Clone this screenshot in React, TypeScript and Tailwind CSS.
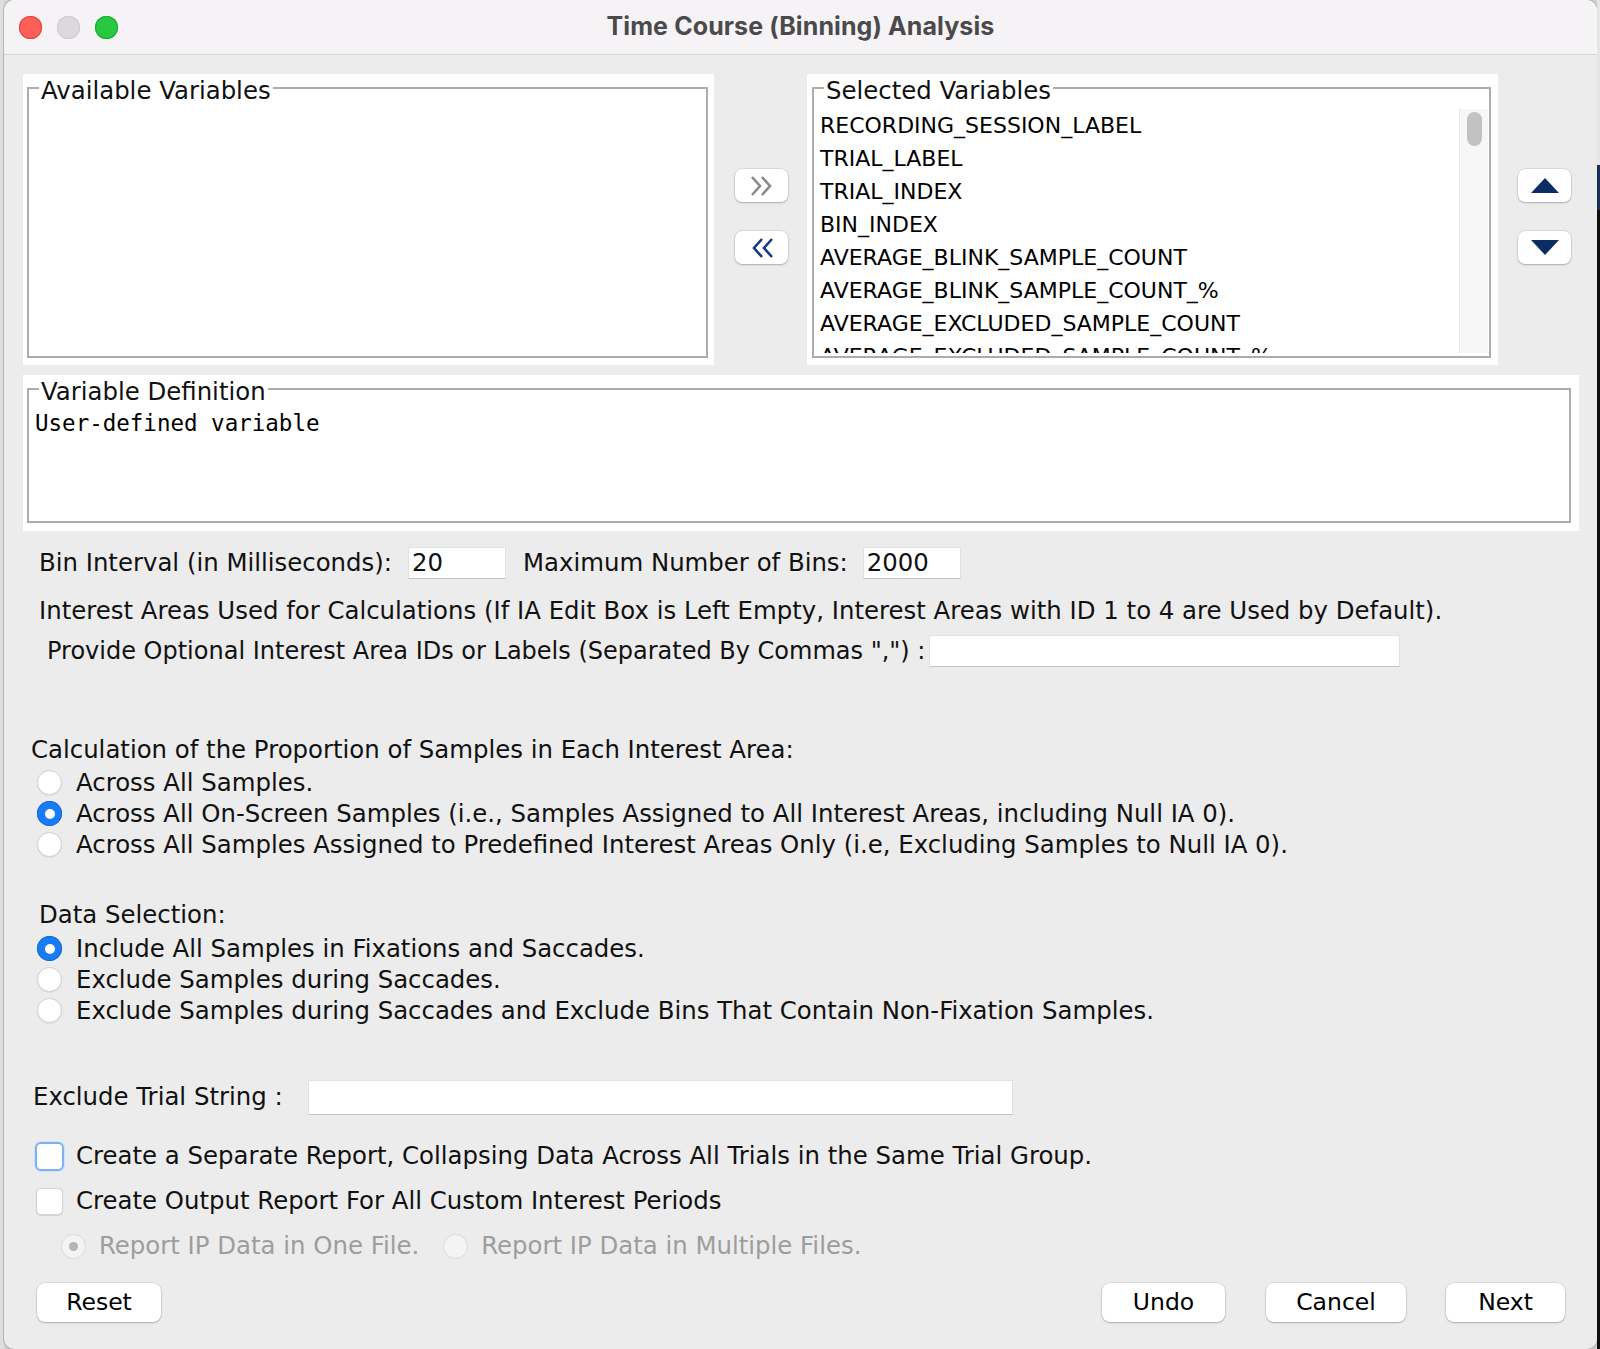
import React from "react";

const SANS = "font-['DejaVu_Sans',sans-serif]";

const selected = [
  "RECORDING_SESSION_LABEL",
  "TRIAL_LABEL",
  "TRIAL_INDEX",
  "BIN_INDEX",
  "AVERAGE_BLINK_SAMPLE_COUNT",
  "AVERAGE_BLINK_SAMPLE_COUNT_%",
  "AVERAGE_EXCLUDED_SAMPLE_COUNT",
  "AVERAGE_EXCLUDED_SAMPLE_COUNT_%",
];

const TitleBar = () => (
  <div className="h-[55px] shrink-0 grid grid-cols-[1fr_auto_1fr] items-center bg-[#f6f3f6] border-b border-[#d6d6d6]">
    <div className="flex items-center gap-[15px] pl-[15px]">
      <span className="w-[23px] h-[23px] rounded-full bg-[#fe5f57] shadow-[inset_0_0_0_1px_#e2463f]" />
      <span className="w-[23px] h-[23px] rounded-full bg-[#dcd9dc] shadow-[inset_0_0_0_1px_#cdc9cd]" />
      <span className="w-[23px] h-[23px] rounded-full bg-[#28c840] shadow-[inset_0_0_0_1px_#1eaa33]" />
    </div>
    <div className="font-['Inter',sans-serif] font-bold text-[25px] text-[#4a4a4a] tracking-[0.1px]">
      Time Course (Binning) Analysis
    </div>
    <div />
  </div>
);

const TitledBox = ({ title, children }: { title: string; children?: React.ReactNode }) => (
  <div className="relative h-full border-2 border-[#acacac]">
    <span className="absolute left-[10px] top-[-13px] bg-white px-[2px] leading-[30px]">{title}</span>
    {children}
  </div>
);

const MacButton = ({ children, className }: { children: React.ReactNode; className: string }) => (
  <button className={`h-[39px] bg-white rounded-[8px] text-[23.5px] text-black flex items-center justify-center shadow-[0_0_0_0.5px_rgba(0,0,0,0.14),0_1px_2px_rgba(0,0,0,0.22)] ${className}`}>
    {children}
  </button>
);

const SmallButton = ({ children }: { children: React.ReactNode }) => (
  <button className="w-[53px] h-[33px] bg-white rounded-[7px] flex items-center justify-center shadow-[0_0_0_0.5px_rgba(0,0,0,0.14),0_1px_2px_rgba(0,0,0,0.22)]">
    {children}
  </button>
);

const Radio = ({ checked, disabled }: { checked?: boolean; disabled?: boolean }) => {
  if (disabled) {
    return (
      <span className="w-[25px] h-[25px] shrink-0 rounded-full bg-[#f4f4f4] border border-[#dadada] flex items-center justify-center">
        {checked && <span className="w-[9px] h-[9px] rounded-full bg-[#b4b4b4]" />}
      </span>
    );
  }
  if (checked) {
    return (
      <span className="w-[25px] h-[25px] shrink-0 rounded-full bg-[#1a7cf5] shadow-[inset_0_0_0_1px_#1669d9] flex items-center justify-center">
        <span className="w-[10px] h-[10px] rounded-full bg-white" />
      </span>
    );
  }
  return (
    <span className="w-[25px] h-[25px] shrink-0 rounded-full bg-white border border-[#d2d2d2] shadow-[0_0.5px_1px_rgba(0,0,0,0.12)]" />
  );
};

const RadioRow = ({ label, checked }: { label: string; checked?: boolean }) => (
  <div className="h-[31px] flex items-center ml-[6px]">
    <Radio checked={checked} />
    <span className="ml-[14px] leading-[31px] whitespace-nowrap">{label}</span>
  </div>
);

const Field = ({ className, value }: { className: string; value?: string }) => (
  <div className={`bg-white border border-[#e2e2e2] border-b-[#c4c4c4] leading-[30px] pl-[3px] ${className}`}>
    {value}
  </div>
);

export default function App() {
  return (
    <div className="flex w-[1600px] h-[1349px] overflow-hidden bg-[#d4d4d4]">
      <div className="w-[4px] shrink-0 bg-[#dedede]" />
      <div className={`w-[1593px] shrink-0 h-full flex flex-col bg-[#ececec] rounded-[10px] overflow-hidden shadow-[0_0_0_1px_rgba(0,0,0,0.18)] ${SANS} text-[24.4px] text-[#111]`}>
        <TitleBar />

        <div className="flex-1 flex flex-col pt-[19px]">
          {/* variable lists */}
          <div className="flex h-[291px] shrink-0">
            <div className="ml-[19px] w-[691px] bg-white pt-[13px] pl-[4px] pr-[6px] pb-[7px]">
              <TitledBox title="Available Variables" />
            </div>

            <div className="ml-[21px] w-[53px] flex flex-col pt-[95px] gap-[29px]">
              <SmallButton>
                <svg width="26" height="22" viewBox="0 0 26 22" fill="none" stroke="#8a8a8a" strokeWidth="2.6" strokeLinejoin="miter">
                  <polyline points="3,2 11,11 3,20" />
                  <polyline points="13,2 21,11 13,20" />
                </svg>
              </SmallButton>
              <SmallButton>
                <svg width="26" height="22" viewBox="0 0 26 22" fill="none" stroke="#163a82" strokeWidth="2.6" strokeLinejoin="miter">
                  <polyline points="13,2 5,11 13,20" />
                  <polyline points="23,2 15,11 23,20" />
                </svg>
              </SmallButton>
            </div>

            <div className="ml-[19px] w-[691px] bg-white pt-[13px] pl-[5px] pr-[7px] pb-[7px]">
              <TitledBox title="Selected Variables">
                <div className="flex h-full pt-[20px] pb-[3px] pr-[1px]">
                  <div className="flex-1 overflow-hidden pl-[6px] text-[22px] text-black">
                    {selected.map((v) => (
                      <div key={v} className="h-[33px] leading-[33px] whitespace-nowrap">
                        {v}
                      </div>
                    ))}
                  </div>
                  <div className="w-[29px] bg-[#f7f7f7] border-l border-[#e6e6e6] pt-[3px] pl-[7px]">
                    <div className="w-[15px] h-[34px] rounded-full bg-[#c2c2c2]" />
                  </div>
                </div>
              </TitledBox>
            </div>

            <div className="ml-[20px] w-[53px] flex flex-col pt-[95px] gap-[29px]">
              <SmallButton>
                <svg width="28" height="15" viewBox="0 0 28 15">
                  <polygon points="14,0 28,15 0,15" fill="#0c2d64" />
                </svg>
              </SmallButton>
              <SmallButton>
                <svg width="28" height="15" viewBox="0 0 28 15">
                  <polygon points="0,0 28,0 14,15" fill="#0c2d64" />
                </svg>
              </SmallButton>
            </div>
          </div>

          {/* variable definition */}
          <div className="mt-[10px] ml-[19px] w-[1556px] h-[156px] shrink-0 bg-white pt-[13px] pl-[4px] pr-[8px] pb-[8px]">
            <TitledBox title="Variable Definition">
              <div className="pt-[18px] pl-[6px] font-['DejaVu_Sans_Mono',monospace] text-[22.5px] leading-[30px] text-black">
                User-defined variable
              </div>
            </TitledBox>
          </div>

          <div className="flex-1 flex flex-col pl-[27px]">
            <div className="mt-[16px] h-[32px] flex items-center ml-[8px] whitespace-nowrap">
              <span>Bin Interval (in Milliseconds):</span>
              <Field className="ml-[16px] w-[98px] h-[32px]" value="20" />
              <span className="ml-[17px]">Maximum Number of Bins:</span>
              <Field className="ml-[15px] w-[98px] h-[32px]" value="2000" />
            </div>

            <div className="mt-[16px] ml-[8px] leading-[32px] whitespace-nowrap">
              Interest Areas Used for Calculations (If IA Edit Box is Left Empty, Interest Areas with ID 1 to 4 are Used by Default).
            </div>
            <div className="mt-[8px] ml-[16px] h-[32px] flex items-center whitespace-nowrap">
              <span className="text-[24px]">Provide Optional Interest Area IDs or Labels (Separated By Commas &quot;,&quot;) :</span>
              <Field className="ml-[4px] w-[471px] h-[32px]" />
            </div>

            <div className="mt-[67px] leading-[32px] whitespace-nowrap">
              Calculation of the Proportion of Samples in Each Interest Area:
            </div>
            <div className="mt-[1px]">
              <RadioRow label="Across All Samples." />
              <RadioRow checked label="Across All On-Screen Samples (i.e., Samples Assigned to All Interest Areas, including Null IA 0)." />
              <RadioRow label="Across All Samples Assigned to Predefined Interest Areas Only (i.e, Excluding Samples to Null IA 0)." />
            </div>

            <div className="mt-[39px] ml-[8px] leading-[32px]">Data Selection:</div>
            <div className="mt-[2px]">
              <RadioRow checked label="Include All Samples in Fixations and Saccades." />
              <RadioRow label="Exclude Samples during Saccades." />
              <RadioRow label="Exclude Samples during Saccades and Exclude Bins That Contain Non-Fixation Samples." />
            </div>

            <div className="mt-[54px] ml-[2px] h-[35px] flex items-center whitespace-nowrap">
              <span>Exclude Trial String :</span>
              <Field className="ml-[25px] w-[705px] h-[35px]" />
            </div>

            <div className="mt-[25px] ml-[4px] h-[32px] flex items-center whitespace-nowrap">
              <span className="w-[29px] h-[29px] rounded-[6px] bg-white border-2 border-[#7db1f3] shadow-[0_0_0_1px_#cfe2fb]" />
              <span className="ml-[12px]">Create a Separate Report, Collapsing Data Across All Trials in the Same Trial Group.</span>
            </div>
            <div className="mt-[13px] ml-[5px] h-[32px] flex items-center whitespace-nowrap">
              <span className="w-[27px] h-[27px] rounded-[5px] bg-white border border-[#d4d4d4] shadow-[0_0.5px_1px_rgba(0,0,0,0.12)]" />
              <span className="ml-[13px]">Create Output Report For All Custom Interest Periods</span>
            </div>

            <div className="mt-[13px] h-[32px] flex items-center whitespace-nowrap text-[#9d9d9d]">
              <span className="ml-[30px]"><Radio disabled checked /></span>
              <span className="ml-[13px]">Report IP Data in One File.</span>
              <span className="ml-[24px]"><Radio disabled /></span>
              <span className="ml-[13px]">Report IP Data in Multiple Files.</span>
            </div>

            <div className="mt-[21px] h-[39px] flex">
              <MacButton className="ml-[6px] w-[124px]">Reset</MacButton>
              <div className="flex-1" />
              <MacButton className="w-[123px]">Undo</MacButton>
              <MacButton className="ml-[41px] w-[140px]">Cancel</MacButton>
              <MacButton className="ml-[40px] mr-[32px] w-[119px]">Next</MacButton>
            </div>
          </div>
        </div>
      </div>
      <div className="w-[3px] shrink-0 flex flex-col">
        <div className="h-[165px] bg-[#e6e6e6]" />
        <div className="h-[45px] bg-[#1b2f5a]" />
        <div className="flex-1 bg-[#101010]" />
      </div>
    </div>
  );
}
